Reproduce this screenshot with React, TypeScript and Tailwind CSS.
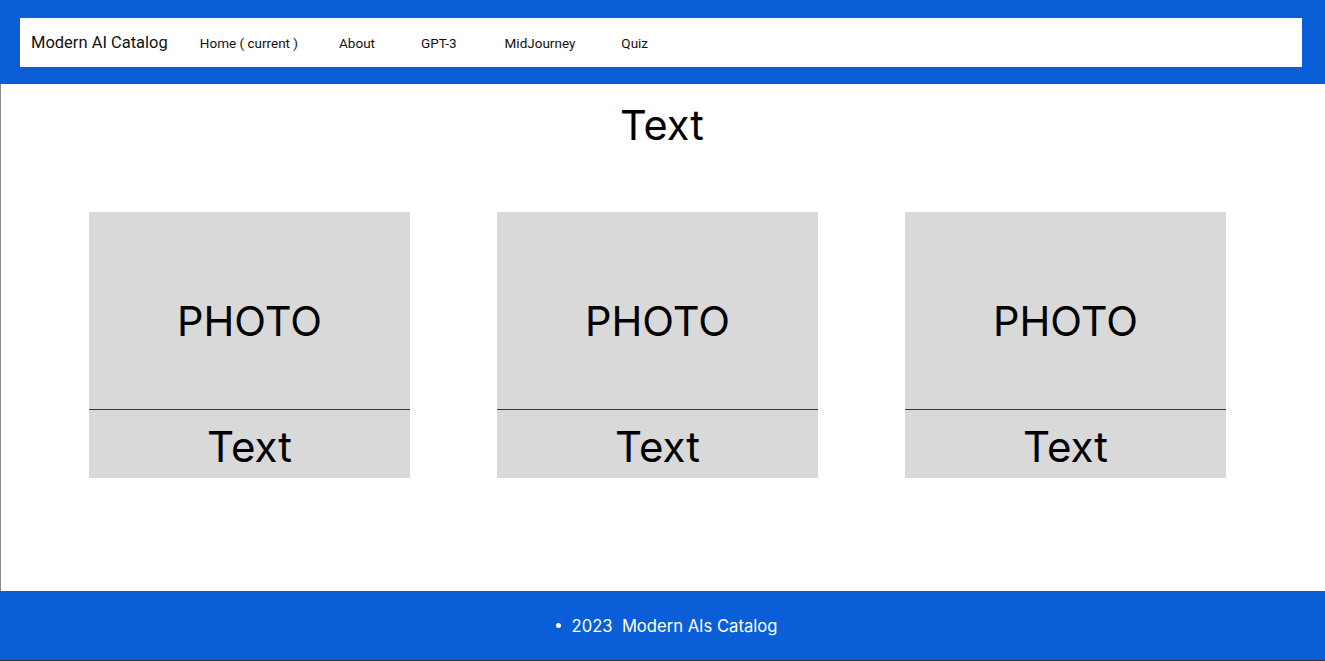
function Card() {
    return (
        <div className="w-[321px] flex flex-col bg-[#d9d9d9]">
            <div className="h-[198px] flex items-center justify-center border-b border-[#3a3a3a] pt-[22px]">
                <span className="text-[41.5px] leading-none">PHOTO</span>
            </div>
            <div className="h-[68px] flex items-center justify-center pt-[5px]">
                <span className="text-[42px] leading-none">Text</span>
            </div>
        </div>
    )
}

export default function App() {
    return (
        <div className="w-full h-[661px] flex flex-col bg-white text-black font-['Inter',sans-serif]">
            {/* header */}
            <header className="h-[84px] shrink-0 bg-[#0b5ed7] pt-[18px] pl-[20px] pr-[23px]">
                <nav className="h-[49px] bg-white flex items-center pl-[11px] pt-[2px] font-['Roboto',sans-serif] text-[#111]">
                    <span className="text-[16.5px]">Modern AI Catalog</span>
                    <div className="flex items-center ml-[32px] text-[13.5px]">
                        <a className="cursor-pointer mr-[41px]">Home ( current )</a>
                        <a className="cursor-pointer mr-[46px]">About</a>
                        <a className="cursor-pointer mr-[48px]">GPT-3</a>
                        <a className="cursor-pointer mr-[46px]">MidJourney</a>
                        <a className="cursor-pointer">Quiz</a>
                    </div>
                </nav>
            </header>

            {/* main */}
            <main className="flex-1 flex flex-col border-l border-[#8a8a8a]">
                <h1 className="text-[41.5px] leading-[48px] text-center pt-[17px] pr-[2px]">Text</h1>
                <div className="flex gap-[87px] pl-[88px] mt-[63px]">
                    <Card />
                    <Card />
                    <Card />
                </div>
            </main>

            {/* footer */}
            <footer className="h-[70px] shrink-0 bg-[#0b5ed7] border-b border-[#333] flex items-center justify-center">
                <div className="flex items-center gap-[11px] text-white text-[16.6px] pt-[1px] pl-[8px]">
                    <span className="w-[5px] h-[5px] rounded-full bg-white" />
                    <span className="whitespace-pre">2023  Modern AIs Catalog</span>
                </div>
            </footer>
        </div>
    )
}
